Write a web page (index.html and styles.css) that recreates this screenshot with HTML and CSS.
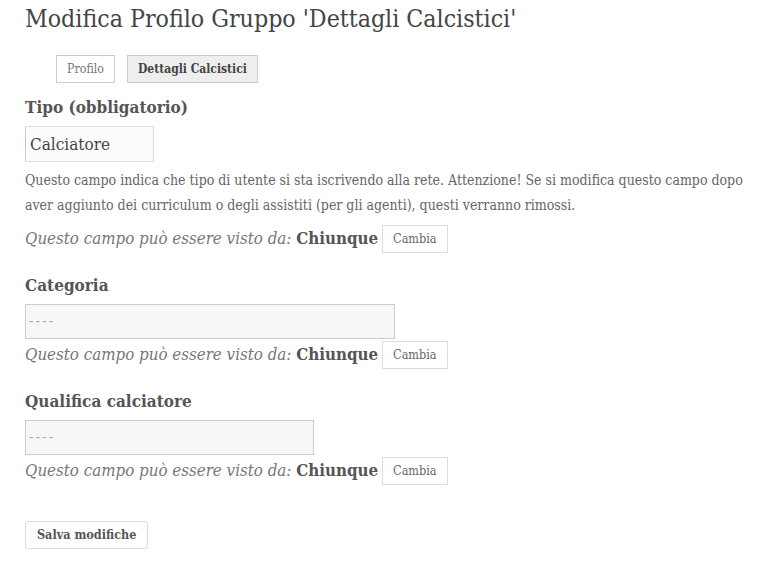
FILE: index.html
```html
<!DOCTYPE html>
<html>
<head>
<meta charset="utf-8">
<link rel="stylesheet" href="styles.css">
</head>
<body>
<div class="page">
  <h1 class="title">Modifica Profilo Gruppo 'Dettagli Calcistici'</h1>
  <div class="tabs">
    <span class="tab">Profilo</span>
    <span class="tab active">Dettagli Calcistici</span>
  </div>

  <div class="field first">
    <div class="label">Tipo (obbligatorio)</div>
    <div class="input-box">Calciatore</div>
    <p class="desc">Questo campo indica che tipo di utente si sta iscrivendo alla rete. Attenzione! Se si modifica questo campo dopo aver aggiunto dei curriculum o degli assistiti (per gli agenti), questi verranno rimossi.</p>
    <div class="vis"><span class="vis-text"><em>Questo campo può essere visto da:</em> <strong>Chiunque</strong></span><span class="btn small">Cambia</span></div>
  </div>

  <div class="field">
    <div class="label">Categoria</div>
    <div class="select wide">----</div>
    <div class="vis"><span class="vis-text"><em>Questo campo può essere visto da:</em> <strong>Chiunque</strong></span><span class="btn small">Cambia</span></div>
  </div>

  <div class="field">
    <div class="label">Qualifica calciatore</div>
    <div class="select mid">----</div>
    <div class="vis"><span class="vis-text"><em>Questo campo può essere visto da:</em> <strong>Chiunque</strong></span><span class="btn small">Cambia</span></div>
  </div>

  <div class="submit"><span class="btn save">Salva modifiche</span></div>
</div>
</body>
</html>
```
FILE: styles.css
```css
body {
  margin: 0;
  background: #fff;
  font-family: "DejaVu Serif Condensed", "DejaVu Serif", serif;
  font-stretch: condensed;
  color: #555;
}
.page {
  padding: 0 0 0 25px;
}
.title {
  margin: 0;
  height: 55px;
  padding-top: 2px;
  box-sizing: border-box;
  font-weight: normal;
  font-size: 24.7px;
  line-height: 34px;
  color: #444;
}
.tabs {
  display: flex;
  gap: 12px;
  margin-left: 31px;
  height: 28px;
}
.tab {
  border: 1px solid #ccc;
  font-size: 12.3px;
  line-height: 26px;
  padding: 0 10px;
  color: #777;
  background: #fff;
}
.tab.active {
  background: #eee;
  font-weight: bold;
  font-size: 12px;
  color: #444;
}
.label {
  font-weight: bold;
  font-size: 17px;
  line-height: 24px;
  height: 24px;
  color: #555;
}
.field.first {
  margin-top: 12px;
}
.field {
  margin-top: 20px;
}
.input-box {
  margin-top: 7px;
  width: 129px;
  height: 36px;
  border: 1px solid #ddd;
  border-left-color: #ccc;
  background: #fcfcfc;
  font-size: 17px;
  line-height: 34px;
  padding-left: 4px;
  box-sizing: border-box;
  color: #444;
}
.desc {
  margin: 6px 0 0;
  font-size: 14px;
  line-height: 25px;
  color: #666;
  width: 730px;
}
.first .vis {
  margin-top: 7px;
}
.vis {
  display: flex;
  align-items: center;
  height: 28px;
  margin-top: 2px;
}
.vis-text {
  font-size: 16.8px;
  line-height: 24px;
  margin-top: -3px;
}
.vis em {
  color: #777;
}
.vis strong {
  color: #555;
}
.btn {
  border: 1px solid #ddd;
  background: #fff;
  color: #666;
}
.btn.small {
  font-size: 12.5px;
  line-height: 26px;
  height: 26px;
  padding: 0 10px;
  margin-left: 4px;
}
.select {
  margin-top: 7px;
  height: 35px;
  border: 1px solid #ccc;
  background: #f7f7f7;
  box-sizing: border-box;
  font-size: 15px;
  letter-spacing: 2px;
  line-height: 33px;
  padding-left: 3px;
  color: #aaa;
}
.select.wide { width: 370px; }
.select.mid { width: 289px; }
.submit {
  margin-top: 36px;
  display: flex;
}
.btn.save {
  font-size: 12.5px;
  font-weight: bold;
  line-height: 26px;
  padding: 0 11px;
  border-radius: 3px;
  color: #555;
  box-shadow: 0 1px 1px rgba(0,0,0,0.06);
}
```
